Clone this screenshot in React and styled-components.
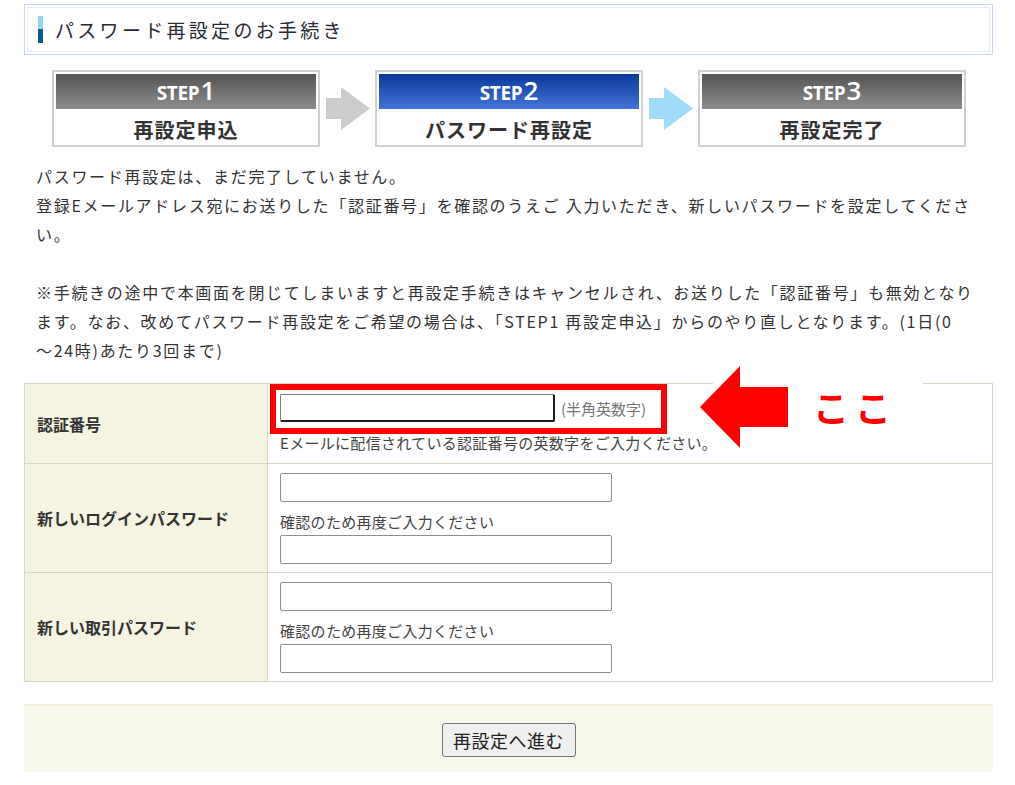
import styled, { createGlobalStyle } from "styled-components";

const GlobalStyle = createGlobalStyle`
  body {
    margin: 0;
    background: #fff;
    color: #333;
    font-family: "Noto Sans CJK JP", "Noto Sans", sans-serif;
  }
`;

const Page = styled.div`
  width: 969px;
  padding: 4px 0 0 24px;
`;

const TitleBox = styled.div`
  height: 51px;
  box-sizing: border-box;
  border: 1px solid #c6d7ee;
  box-shadow: inset 0 0 0 2px #fff, inset 0 0 0 3px #e4ecf8;
  display: flex;
  align-items: center;
  gap: 12px;
  padding-left: 13px;
`;

const TitleMark = styled.span`
  width: 5px;
  height: 27px;
  background: linear-gradient(#92d4f6 0 48%, #0f5799 48% 100%);
`;

const Title = styled.h1`
  margin: 0;
  font-size: 19px;
  font-weight: normal;
  letter-spacing: 3.3px;
  color: #2a2a33;
`;

const Steps = styled.div`
  display: flex;
  margin-top: 15px;
  padding-left: 28px;
`;

const StepBox = styled.div`
  width: 268px;
  height: 77px;
  box-sizing: border-box;
  border: 2px solid #d2d2d2;
  padding: 2px;
  display: flex;
  flex-direction: column;
`;

const StepHead = styled.div`
  height: 35px;
  display: flex;
  align-items: baseline;
  justify-content: center;
  box-sizing: border-box;
  color: #fff;
  font-family: "Open Sans", "Noto Sans", sans-serif;
  line-height: 33px;
  background: ${(p) =>
    p.$active ? "linear-gradient(#0a399b, #4573d9)" : "linear-gradient(#545454, #8d8d8d)"};

  b {
    font-size: 19px;
    font-weight: 700;
    letter-spacing: -0.3px;
  }

  span {
    font-size: 26px;
    font-weight: 600;
    margin-left: 1px;
  }
`;

const StepLabel = styled.div`
  flex: 1;
  display: flex;
  align-items: center;
  justify-content: center;
  padding-top: 6px;
  font-size: 20px;
  font-weight: bold;
  letter-spacing: 1px;
  color: #333;
`;

const ArrowCell = styled.div`
  width: 55px;
  display: flex;
  align-items: center;
  justify-content: center;
`;

const Notice = styled.div`
  margin-top: 15px;
  padding-left: 12px;
  font-size: 16px;
  line-height: 29px;
  letter-spacing: 1.7px;
  white-space: nowrap;
  color: #333;

  p {
    margin: 0;
  }

  p + p {
    margin-top: 29px;
  }
`;

const TableWrap = styled.div`
  position: relative;
  margin-top: 18px;
`;

const FormTable = styled.table`
  width: 969px;
  border-collapse: collapse;
  table-layout: fixed;

  th,
  td {
    border: 1px solid #d8d6c9;
  }
`;

const Label = styled.th`
  width: 229px;
  padding-left: 12px;
  background: #f5f3e1;
  text-align: left;
  vertical-align: middle;
  font-size: 16px;
  font-weight: bold;
  color: #333;
`;

const Field = styled.td`
  padding: ${(p) => (p.$first ? "10px 12px" : "9px 12px 8px")};
  vertical-align: top;
  background: #fff;
`;

const InputRow = styled.div`
  display: flex;
  align-items: center;
  gap: 6px;
`;

const TextInput = styled.input`
  display: block;
  box-sizing: border-box;
  width: ${(p) => p.$w}px;
  height: ${(p) => p.$h}px;
  margin: 0;
  border: 1px solid #8f8f8f;
  border-radius: 2px;
  background: #fff;
  outline: none;

  ${(p) =>
    p.$focus &&
    `
    border-color: #7a7a7a #1e1e1e #1e1e1e #7a7a7a;
    border-width: 1px 2px 2px 1px;
  `}
`;

const Hint = styled.span`
  font-size: 15px;
  color: #777;
`;

const Help = styled.div`
  margin-top: ${(p) => p.$gap}px;
  margin-bottom: ${(p) => p.$after}px;
  font-size: 15px;
  line-height: 20px;
  letter-spacing: 0.3px;
  color: #444;
`;

const Cover = styled.div`
  position: absolute;
  left: 689px;
  top: -20px;
  width: 210px;
  height: 26px;
  background: #fff;
`;

const RedFrame = styled.div`
  position: absolute;
  left: 246px;
  top: 1px;
  width: 397px;
  height: 50px;
  box-sizing: border-box;
  border: 6px solid #ff0000;
  pointer-events: none;
`;

const BigArrow = styled.svg`
  position: absolute;
  left: 676px;
  top: -17px;
`;

const Koko = styled.div`
  position: absolute;
  left: 789px;
  top: 3px;
  font-size: 36px;
  line-height: 40px;
  font-weight: bold;
  letter-spacing: 6px;
  color: #ff0000;
`;

const ButtonBar = styled.div`
  margin-top: 22px;
  height: 68px;
  box-sizing: border-box;
  background: #f8f8ec;
  border-top: 2px solid #efeed9;
  display: flex;
  align-items: center;
  justify-content: center;
`;

const Submit = styled.button`
  width: 134px;
  height: 34px;
  margin-top: 2px;
  border: 1px solid #767676;
  border-radius: 3px;
  background: #efefef;
  color: #222;
  font-family: "Noto Sans CJK JP", sans-serif;
  font-size: 18px;
  letter-spacing: 0.5px;
  padding: 0;
`;

const StepArrow = ({ color }) => (
  <svg width="44" height="43" viewBox="0 0 44 43">
    <polygon points="0,11 15,11 15,0 44,21.5 15,43 15,32 0,32" fill={color} />
  </svg>
);

const steps = [
  { no: "1", label: "再設定申込" },
  { no: "2", label: "パスワード再設定", active: true },
  { no: "3", label: "再設定完了" },
];

const arrows = ["#cccccc", "#a0dcf7"];

export default function App() {
  return (
    <Page>
      <GlobalStyle />
      <TitleBox>
        <TitleMark />
        <Title>パスワード再設定のお手続き</Title>
      </TitleBox>

      <Steps>
        {steps.map((s, i) => (
          <div key={s.no} style={{ display: "contents" }}>
            <StepBox>
              <StepHead $active={s.active}>
                <b>STEP</b>
                <span>{s.no}</span>
              </StepHead>
              <StepLabel>{s.label}</StepLabel>
            </StepBox>
            {i < arrows.length && (
              <ArrowCell>
                <StepArrow color={arrows[i]} />
              </ArrowCell>
            )}
          </div>
        ))}
      </Steps>

      <Notice>
        <p>
          パスワード再設定は、まだ完了していません。
          <br />
          登録Eメールアドレス宛にお送りした「認証番号」を確認のうえご 入力いただき、新しいパスワードを設定してくださ
          <br />
          い。
        </p>
        <p>
          ※手続きの途中で本画面を閉じてしまいますと再設定手続きはキャンセルされ、お送りした「認証番号」も無効となり
          <br />
          ます。なお、改めてパスワード再設定をご希望の場合は、「STEP1 再設定申込」からのやり直しとなります。(1日(0
          <br />
          〜24時)あたり3回まで)
        </p>
      </Notice>

      <TableWrap>
        <FormTable>
          <tbody>
            <tr>
              <Label>認証番号</Label>
              <Field $first>
                <InputRow>
                  <TextInput $w={275} $h={28} $focus />
                  <Hint>(半角英数字)</Hint>
                </InputRow>
                <Help $gap={11} $after={0}>
                  Eメールに配信されている認証番号の英数字をご入力ください。
                </Help>
              </Field>
            </tr>
            <tr>
              <Label>新しいログインパスワード</Label>
              <Field>
                <TextInput type="password" $w={332} $h={29} />
                <Help $gap={10} $after={3}>確認のため再度ご入力ください</Help>
                <TextInput type="password" $w={332} $h={29} />
              </Field>
            </tr>
            <tr>
              <Label>新しい取引パスワード</Label>
              <Field>
                <TextInput type="password" $w={332} $h={29} />
                <Help $gap={10} $after={3}>確認のため再度ご入力ください</Help>
                <TextInput type="password" $w={332} $h={29} />
              </Field>
            </tr>
          </tbody>
        </FormTable>

        <Cover />
        <RedFrame />
        <BigArrow width="88" height="82" viewBox="0 0 88 82">
          <polygon points="0,41 40,0 40,21 88,21 88,61 40,61 40,82" fill="#ff0000" />
        </BigArrow>
        <Koko>ここ</Koko>
      </TableWrap>

      <ButtonBar>
        <Submit type="button">再設定へ進む</Submit>
      </ButtonBar>
    </Page>
  );
}
